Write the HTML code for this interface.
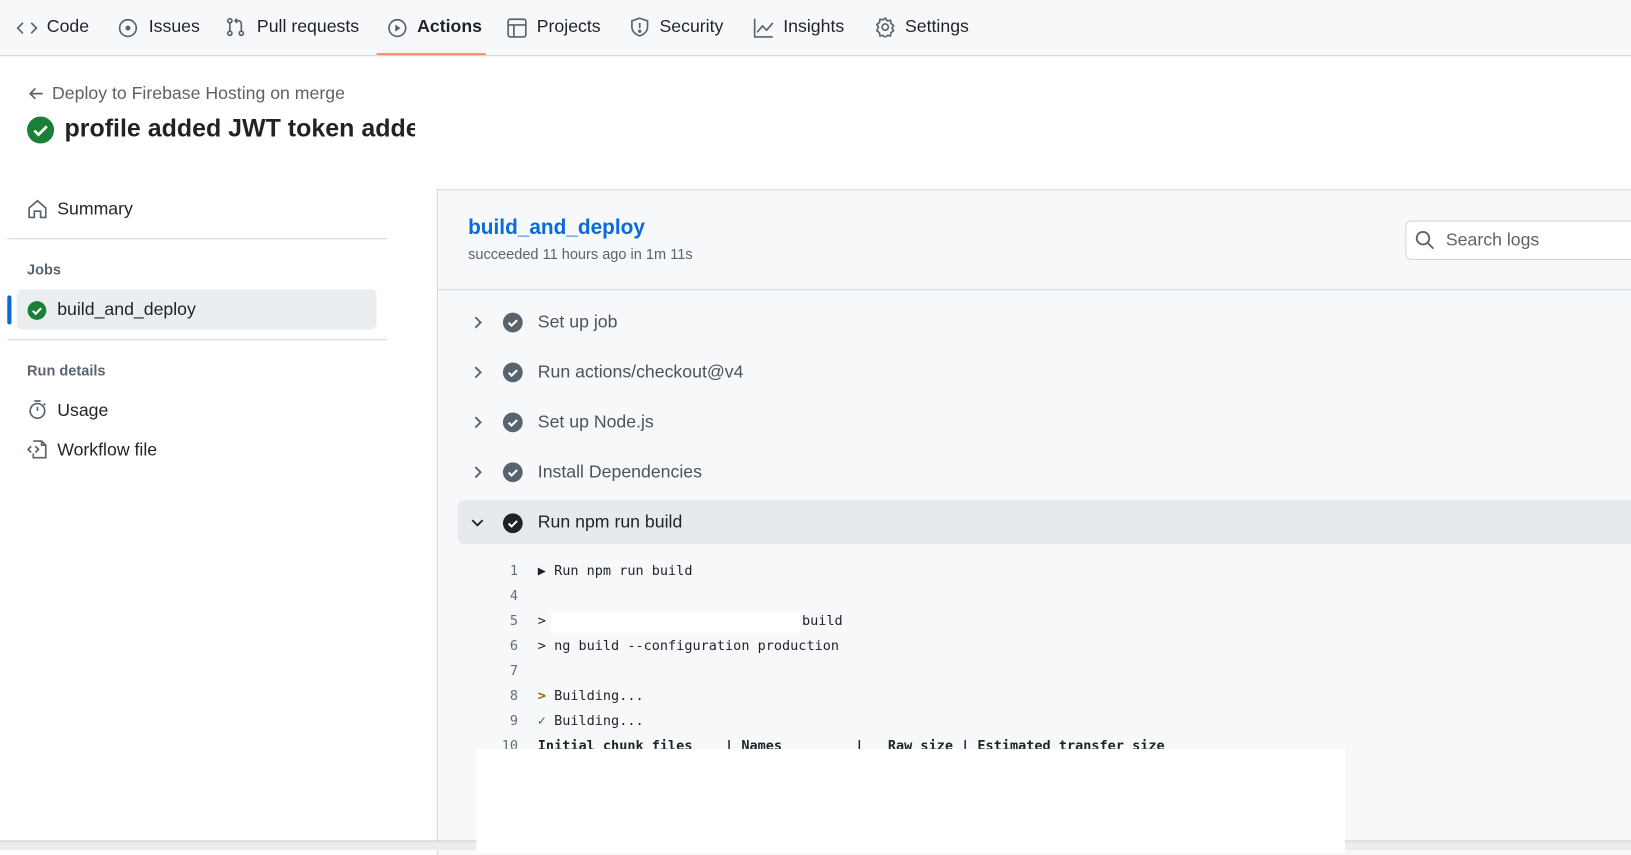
<!DOCTYPE html>
<html><head><meta charset="utf-8"><style>
*{box-sizing:border-box;margin:0;padding:0}
html,body{width:1631px;height:850px;overflow:hidden;background:#fff}
#w{position:absolute;left:0;top:0;width:1568px;height:817px;transform:scale(1.0402);transform-origin:0 0;font-family:"Liberation Sans",sans-serif;color:#1f2328}
.a{position:absolute;white-space:pre}
svg{position:absolute}
.nav{position:absolute;left:0;top:0;width:1568px;height:54px;background:#f6f8fa;border-bottom:1px solid #d0d7de}
.ni{position:absolute;top:16px;font-size:17px;color:#1f2328}
.mono{font-family:"DejaVu Sans Mono","Liberation Mono",monospace;font-size:13px}
.ln{position:absolute;width:30px;text-align:right;color:#656d76;font-family:"DejaVu Sans Mono",monospace;font-size:13px}
.step{position:absolute;left:517px;font-size:17px;color:#4b535c}
</style></head><body><div id="w">
<div class="nav">
<svg style="left:16px;top:18px" width="20" height="18" viewBox="0 0 20 18" fill="none" stroke="#59636e" stroke-width="1.6"><path d="M6 4 1 9l5 5M14 4l5 5-5 5"/></svg>
<div class="ni" style="left:45px">Code</div>
<svg style="left:113px;top:17px" width="20" height="20" fill="none" stroke="#59636e" stroke-width="1.6"><circle cx="10" cy="10" r="8"/><circle cx="10" cy="10" r="1.6" fill="#59636e"/></svg>
<div class="ni" style="left:143px">Issues</div>
<svg style="left:217px;top:16px" width="20" height="20" fill="none" stroke="#59636e" stroke-width="1.6"><circle cx="4" cy="4" r="2"/><circle cx="4" cy="16" r="2"/><circle cx="15" cy="16" r="2"/><path d="M4 6v8M15 14V7q0-3-3-3H9m2-2-2 2 2 2"/></svg>
<div class="ni" style="left:247px">Pull requests</div>
<svg style="left:372px;top:17px" width="20" height="20" fill="none" stroke="#59636e" stroke-width="1.6"><circle cx="10" cy="10" r="8"/><path d="M8 6.5v7l5-3.5z" fill="#59636e" stroke="none"/></svg>
<div class="ni" style="left:401px;font-weight:bold">Actions</div>
<div class="a" style="left:362px;top:51px;width:105px;height:2px;background:#fd8c73"></div>
<svg style="left:487px;top:17px" width="20" height="20" fill="none" stroke="#59636e" stroke-width="1.6"><rect x="1.5" y="1.5" width="17" height="17" rx="2"/><path d="M1.5 7h17M7 7v11.5"/></svg>
<div class="ni" style="left:516px">Projects</div>
<svg style="left:605px;top:16px" width="20" height="20" fill="none" stroke="#59636e" stroke-width="1.6"><path d="M10 1.5 2.5 4v6c0 4.5 4 7.5 7.5 8.5 3.5-1 7.5-4 7.5-8.5V4z"/><path d="M10 6v5"/><circle cx="10" cy="14" r=".8" fill="#59636e"/></svg>
<div class="ni" style="left:634px">Security</div>
<svg style="left:724px;top:17px" width="20" height="20" fill="none" stroke="#59636e" stroke-width="1.6"><path d="M1.5 1v17.5H19M4 14l5-6 4 4 6-7"/></svg>
<div class="ni" style="left:753px">Insights</div>
<svg style="left:841px;top:16px" width="20" height="20" fill="none" stroke="#59636e" stroke-width="1.6"><circle cx="10" cy="10" r="3"/><path d="M10 1.5l2 2.5 3-.5.5 3 2.5 2-1.5 2.5 1.5 2.5-2.5 2-.5 3-3-.5-2 2.5-2-2.5-3 .5-.5-3-2.5-2L3.5 10 2 7.5l2.5-2 .5-3 3 .5z"/></svg>
<div class="ni" style="left:870px">Settings</div>
</div>

<svg style="left:27px;top:82px" width="16" height="16" fill="none" stroke="#59636e" stroke-width="1.6"><path d="M14 8H2m5-5L2 8l5 5"/></svg>
<div class="a" style="left:50px;top:80px;font-size:17px;color:#59636e">Deploy to Firebase Hosting on merge</div>
<svg style="left:25px;top:111px" width="28" height="28"><circle cx="14" cy="14" r="13" fill="#1a7f37"/><path d="M8 14.5l4 4 8-8" fill="none" stroke="#fff" stroke-width="2.6"/></svg>
<div class="a" style="left:62px;top:110px;font-size:24px;font-weight:bold;width:337px;overflow:hidden;color:#1f2328">profile added JWT token added</div>

<svg style="left:26px;top:191px" width="20" height="20" fill="none" stroke="#59636e" stroke-width="1.6"><path d="M2 9 10 2l8 7v9h-5v-6H7v6H2z"/></svg>
<div class="a" style="left:55px;top:191px;font-size:17px">Summary</div>
<div class="a" style="left:7px;top:229px;width:365px;height:1px;background:#d0d7de"></div>
<div class="a" style="left:26px;top:251px;font-size:14px;color:#59636e;font-weight:bold">Jobs</div>
<div class="a" style="left:16px;top:278px;width:346px;height:39px;background:#ebeef1;border-radius:6px"></div>
<div class="a" style="left:7px;top:284px;width:4px;height:28px;background:#0969da;border-radius:2px"></div>
<svg style="left:26px;top:289px" width="19" height="19"><circle cx="9.5" cy="9.5" r="9" fill="#1a7f37"/><path d="M5.5 9.8l2.8 2.8 5.3-5.3" fill="none" stroke="#fff" stroke-width="2"/></svg>
<div class="a" style="left:55px;top:288px;font-size:17px">build_and_deploy</div>
<div class="a" style="left:7px;top:326px;width:365px;height:1px;background:#d0d7de"></div>
<div class="a" style="left:26px;top:348px;font-size:14px;color:#59636e;font-weight:bold">Run details</div>
<svg style="left:26px;top:384px" width="20" height="20" fill="none" stroke="#59636e" stroke-width="1.6"><circle cx="10" cy="11" r="7"/><path d="M10 11V7M7 1.5h6M16 4l1.5 1.5"/></svg>
<div class="a" style="left:55px;top:385px;font-size:17px">Usage</div>
<svg style="left:26px;top:422px" width="20" height="20" fill="none" stroke="#59636e" stroke-width="1.6"><path d="M6 2h8l4 4v12H6v-4M14 2v4h4M4 7 1 10l3 3M8 7l3 3-3 3"/></svg>
<div class="a" style="left:55px;top:423px;font-size:17px">Workflow file</div>

<div class="a" style="left:420px;top:182px;width:1160px;height:640px;background:#f6f8fa;border-left:1px solid #d0d7de;border-top:1px solid #d0d7de"></div>
<div class="a" style="left:450px;top:208px;font-size:20px;font-weight:bold;color:#0969da">build_and_deploy</div>
<div class="a" style="left:450px;top:236px;font-size:14px;color:#59636e">succeeded 11 hours ago in 1m 11s</div>
<div class="a" style="left:1351px;top:212px;width:240px;height:38px;background:#fff;border:1px solid #d0d7de;border-radius:6px"></div>
<svg style="left:1360px;top:221px" width="20" height="20" fill="none" stroke="#59636e" stroke-width="1.8"><circle cx="8" cy="8" r="6"/><path d="M12.5 12.5 18 18"/></svg>
<div class="a" style="left:1390px;top:221px;font-size:17px;color:#59636e">Search logs</div>
<div class="a" style="left:421px;top:278px;width:1160px;height:1px;background:#d0d7de"></div>

<svg style="left:453px;top:302px" width="14" height="16" fill="none" stroke="#59636e" stroke-width="1.8"><path d="M4 3l5 5-5 5"/></svg>
<svg style="left:483px;top:300px" width="20" height="20"><circle cx="10" cy="10" r="9.5" fill="#59636e"/><path d="M6 10.3l2.8 2.8 5.3-5.3" fill="none" stroke="#fff" stroke-width="2"/></svg>
<div class="step" style="top:300px">Set up job</div>
<svg style="left:453px;top:350px" width="14" height="16" fill="none" stroke="#59636e" stroke-width="1.8"><path d="M4 3l5 5-5 5"/></svg>
<svg style="left:483px;top:348px" width="20" height="20"><circle cx="10" cy="10" r="9.5" fill="#59636e"/><path d="M6 10.3l2.8 2.8 5.3-5.3" fill="none" stroke="#fff" stroke-width="2"/></svg>
<div class="step" style="top:348px">Run actions/checkout@v4</div>
<svg style="left:453px;top:398px" width="14" height="16" fill="none" stroke="#59636e" stroke-width="1.8"><path d="M4 3l5 5-5 5"/></svg>
<svg style="left:483px;top:396px" width="20" height="20"><circle cx="10" cy="10" r="9.5" fill="#59636e"/><path d="M6 10.3l2.8 2.8 5.3-5.3" fill="none" stroke="#fff" stroke-width="2"/></svg>
<div class="step" style="top:396px">Set up Node.js</div>
<svg style="left:453px;top:446px" width="14" height="16" fill="none" stroke="#59636e" stroke-width="1.8"><path d="M4 3l5 5-5 5"/></svg>
<svg style="left:483px;top:444px" width="20" height="20"><circle cx="10" cy="10" r="9.5" fill="#59636e"/><path d="M6 10.3l2.8 2.8 5.3-5.3" fill="none" stroke="#fff" stroke-width="2"/></svg>
<div class="step" style="top:444px">Install Dependencies</div>

<div class="a" style="left:440px;top:481px;width:1140px;height:42px;background:#e6e9ed;border-radius:6px 0 0 6px"></div>
<svg style="left:451px;top:496px" width="16" height="14" fill="none" stroke="#1f2328" stroke-width="1.8"><path d="M3 4l5 5 5-5"/></svg>
<svg style="left:483px;top:493px" width="20" height="20"><circle cx="10" cy="10" r="9.5" fill="#1f2328"/><path d="M6 10.3l2.8 2.8 5.3-5.3" fill="none" stroke="#fff" stroke-width="2"/></svg>
<div class="step" style="top:492px;color:#1f2328">Run npm run build</div>

<div class="ln" style="left:468px;top:542px">1</div><div class="a mono" style="left:517px;top:542px">▶ Run npm run build</div>
<div class="ln" style="left:468px;top:566px">4</div>
<div class="ln" style="left:468px;top:590px">5</div><div class="a mono" style="left:517px;top:590px">&gt;</div><div class="a" style="left:529px;top:588px;width:240px;height:20px;background:#fff"></div><div class="a mono" style="left:771px;top:590px">build</div>
<div class="ln" style="left:468px;top:614px">6</div><div class="a mono" style="left:517px;top:614px">&gt; ng build --configuration production</div>
<div class="ln" style="left:468px;top:638px">7</div>
<div class="ln" style="left:468px;top:662px">8</div><div class="a mono" style="left:517px;top:662px"><span style="color:#9a6700;font-weight:bold">&gt;</span> Building...</div>
<div class="ln" style="left:468px;top:686px">9</div><div class="a mono" style="left:517px;top:686px"><span style="color:#1a7f37;font-weight:bold">✓</span> Building...</div>
<div class="ln" style="left:468px;top:710px">10</div><div class="a mono" style="left:517px;top:710px;font-weight:bold">Initial chunk files    | Names         |   Raw size | Estimated transfer size</div>

<div class="a" style="left:458px;top:720px;width:835px;height:100px;background:#fff"></div>
<div class="a" style="left:0;top:808px;width:458px;height:9px;background:#ececec;border-top:1px solid #d8c8c8"></div>
<div class="a" style="left:1293px;top:808px;width:300px;height:9px;background:#ececec;border-top:1px solid #d8c8c8"></div>
</div></body></html>
